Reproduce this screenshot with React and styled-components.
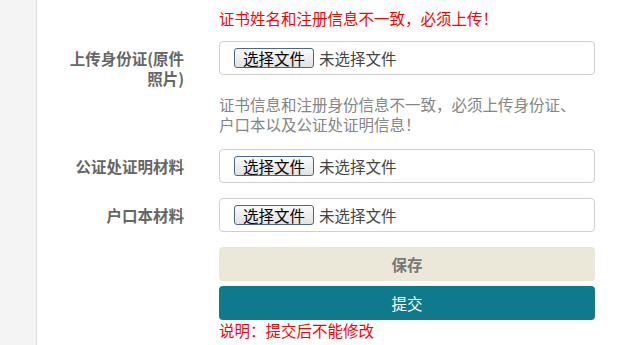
import React from "react";
import styled, { createGlobalStyle } from "styled-components";

const Global = createGlobalStyle`
  html, body { margin: 0; padding: 0; background: #fff; }
  body {
    font-family: "Noto Sans CJK SC", "Noto Sans", "Liberation Sans", sans-serif;
    font-size: 15.5px;
    text-spacing-trim: space-all;
  }
`;

const Page = styled.div`
  display: flex;
  height: 345px;
  overflow: hidden;
`;

const Sidebar = styled.div`
  width: 36px;
  flex: none;
  background: #f4f4f4;
  border-right: 1px solid #dedede;
`;

const Main = styled.main`
  flex: 1;
  padding-top: 8px;
`;

const Group = styled.div`
  display: grid;
  grid-template-columns: 147px 376px;
  column-gap: 35px;
  align-items: start;
  margin-bottom: ${(p) => p.$mb ?? 15}px;
`;

const Label = styled.div`
  text-align: right;
  font-weight: bold;
  color: #666;
  line-height: 20px;
  padding-top: 7px;
`;

const Field = styled.div`
  grid-column: 2;
`;

const Note = styled.div`
  color: ${(p) => (p.$red ? "#ff0000" : "#858585")};
  line-height: 20px;
  white-space: pre-line;
`;

const FileBox = styled.label`
  display: flex;
  align-items: center;
  box-sizing: border-box;
  height: 34px;
  padding: 0 14px;
  border: 1px solid #cfcfcf;
  border-radius: 4px;
  gap: 5px;
  cursor: pointer;
`;

const FileButton = styled.span`
  box-sizing: border-box;
  width: 80px;
  height: 20px;
  display: flex;
  align-items: center;
  justify-content: center;
  border: 1px solid #4d6580;
  border-radius: 3px;
  background: linear-gradient(#fafafa, #e2e2e2);
  color: #000;
  font-size: 15.5px;
  line-height: 18px;
`;

const FileName = styled.span`
  color: #444;
`;

const HiddenInput = styled.input`
  display: none;
`;

const ActionButton = styled.button`
  display: block;
  width: 100%;
  height: 34px;
  border: none;
  border-radius: 4px;
  font-family: inherit;
  font-size: 15.5px;
  background: ${(p) => (p.$primary ? "#0f7a8e" : "#ebe8d9")};
  color: ${(p) => (p.$primary ? "#fff" : "#777")};
  font-weight: ${(p) => (p.$primary ? "normal" : "bold")};
  margin-bottom: ${(p) => p.$mb ?? 0}px;
  cursor: pointer;
`;

function FileInput() {
  return (
    <FileBox>
      <HiddenInput type="file" />
      <FileButton>选择文件</FileButton>
      <FileName>未选择文件</FileName>
    </FileBox>
  );
}

export default function App() {
  return (
    <>
      <Global />
      <Page>
        <Sidebar />
        <Main>
          <Group $mb={13}>
            <Field>
              <Note $red>证书姓名和注册信息不一致，必须上传！</Note>
            </Field>
          </Group>
          <Group $mb={6}>
            <Label>
              上传身份证(原件
              <br />
              照片)
            </Label>
            <Field>
              <FileInput />
            </Field>
          </Group>
          <Group>
            <Field>
              <Note>
                {"证书信息和注册身份信息不一致，必须上传身份证、\n户口本以及公证处证明信息！"}
              </Note>
            </Field>
          </Group>
          <Group>
            <Label>公证处证明材料</Label>
            <Field>
              <FileInput />
            </Field>
          </Group>
          <Group>
            <Label>户口本材料</Label>
            <Field>
              <FileInput />
            </Field>
          </Group>
          <Group>
            <Field>
              <ActionButton $mb={5}>保存</ActionButton>
              <ActionButton $primary>提交</ActionButton>
              <Note $red>说明：提交后不能修改</Note>
            </Field>
          </Group>
        </Main>
      </Page>
    </>
  );
}
